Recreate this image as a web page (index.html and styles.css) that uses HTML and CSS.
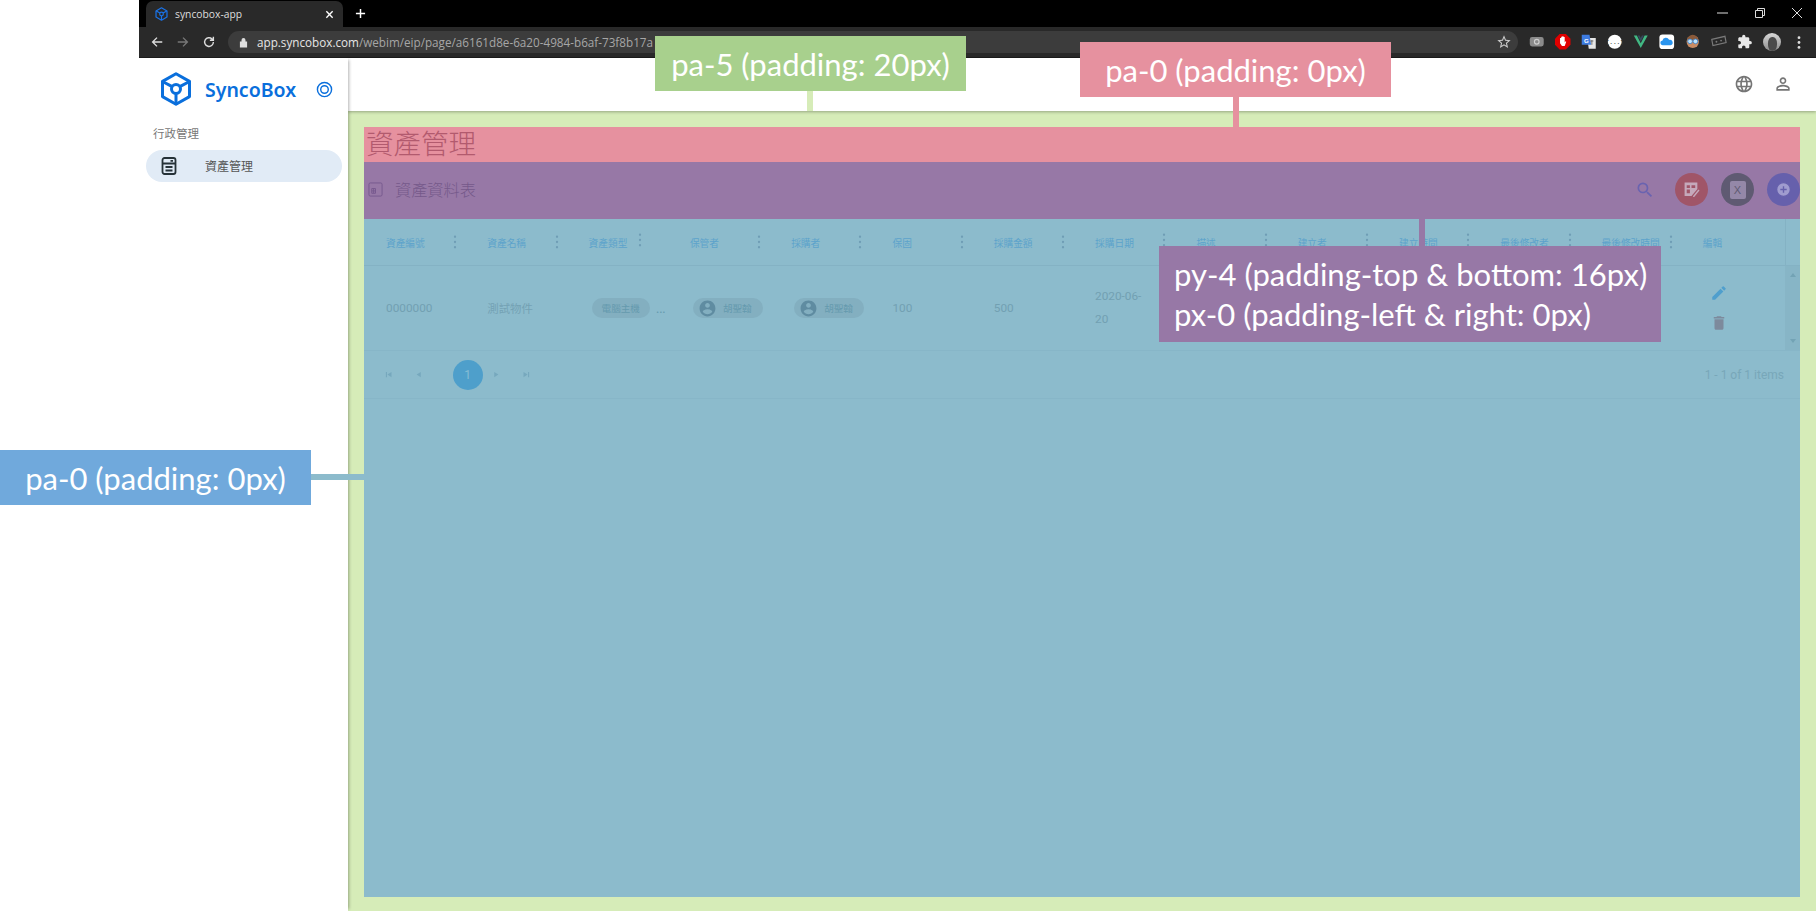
FILE: index.html
```html
<!DOCTYPE html>
<html lang="zh-Hant">
<head>
<meta charset="utf-8">
<title>syncobox-app</title>
<link rel="stylesheet" href="styles.css">
</head>
<body>
<svg class="sprite" aria-hidden="true">
  <symbol id="logo" viewBox="0 0 32 34"><g fill="none" stroke="currentColor" stroke-width="3" stroke-linejoin="round"><path d="M16 1.800 29.500 9.400V24.600L16 32.200 2.500 24.600V9.400z"/><circle cx="16" cy="17" r="4.500"/><path d="M3 9.700 12.200 14.600M29 9.700 19.800 14.600M16 21.500V31.500"/></g></symbol>
  <symbol id="kebab" viewBox="0 0 4 16"><circle cx="2" cy="2" r="1.300"/><circle cx="2" cy="8" r="1.300"/><circle cx="2" cy="14" r="1.300"/></symbol>
  <symbol id="account" viewBox="0 0 24 24"><path d="M12 2C6.480 2 2 6.480 2 12s4.480 10 10 10 10-4.480 10-10S17.520 2 12 2zm0 3c1.660 0 3 1.340 3 3s-1.340 3-3 3-3-1.340-3-3 1.340-3 3-3zm0 14.200c-2.500 0-4.710-1.280-6-3.220.030-1.990 4-3.080 6-3.080 1.990 0 5.970 1.090 6 3.080-1.290 1.940-3.500 3.220-6 3.220z"/></symbol>
</svg>

<div class="page">
  <div class="margin"></div>
  <div class="window">
    <div class="tabstrip">
      <div class="tab">
        <svg class="favicon"><use href="#logo"/></svg>
        <span class="tab-title">syncobox-app</span>
        <svg class="tab-close" viewBox="0 0 10 10"><path d="M1.500 1.500l7 7M8.500 1.500l-7 7"/></svg>
      </div>
      <svg class="tab-new" viewBox="0 0 12 12"><path d="M6 1v10M1 6h10"/></svg>
      <div class="winctl">
        <svg viewBox="0 0 12 12"><path d="M0 6h11" class="thin"/></svg>
        <svg viewBox="0 0 12 12"><path d="M1.500 3.500h7v7h-7zM3.500 3.500v-2h7v7h-2" class="thin"/></svg>
        <svg viewBox="0 0 12 12"><path d="M1 1l10 10M11 1L1 11" class="thin"/></svg>
      </div>
    </div>

    <div class="toolbar">
      <svg class="nav" viewBox="0 0 16 16"><path d="M14 8H3M8 3L3 8l5 5"/></svg>
      <svg class="nav dim" viewBox="0 0 16 16"><path d="M2 8h11M8 3l5 5-5 5"/></svg>
      <svg class="nav" viewBox="0 0 16 16"><path d="M13 8a5 5 0 1 1-1.500-3.500L13 6M13 2v4H9"/></svg>
      <div class="omnibox">
        <svg class="lock" viewBox="0 0 10 12"><path d="M1 5h8v6.500H1zM2.800 5V3.200a2.200 2.200 0 0 1 4.400 0V5" /></svg>
        <span class="url"><b>app.syncobox.com</b>/webim/eip/page/a6161d8e-6a20-4984-b6af-73f8b17a</span>
        <span class="spacer"></span>
        <svg class="star" viewBox="0 0 24 24"><path d="M22 9.240l-7.190-.620L12 2 9.190 8.630 2 9.240l5.460 4.730L5.820 21 12 17.270 18.180 21l-1.630-7.030L22 9.240zM12 15.400l-3.760 2.270 1-4.280-3.320-2.880 4.380-.380L12 6.100l1.710 4.040 4.380.380-3.320 2.880 1 4.280L12 15.400z"/></svg>
      </div>
      <div class="exts">
        <svg viewBox="0 0 20 20"><rect x="1" y="4" width="18" height="12" rx="3" fill="#8b8b8b"/><circle cx="10" cy="10" r="3" fill="none" stroke="#d0d0d0" stroke-width="1.500"/></svg>
        <svg viewBox="0 0 20 20"><path d="M6 0h8l6 6v8l-6 6H6l-6-6V6z" fill="#e00000"/><path d="M6.500 8V5h1.500v3-4.500h1.500V8 3h1.500v5-4h1.500v7l1-1.500 1 .5-2 5.500H9L6.500 12z" fill="#fff"/></svg>
        <svg viewBox="0 0 20 20"><path d="M8 5h11v14H10z" fill="#e6e6e6"/><path d="M1 1h10l2 13H1z" fill="#3d7be0"/><text x="4" y="11" class="ext-g">G</text><path d="M12 9h4M14 8v6" stroke="#555" fill="none"/></svg>
        <svg viewBox="0 0 20 20"><circle cx="10" cy="10" r="9" fill="#fff"/><text x="10" y="13" class="ext-j">{...}</text></svg>
        <svg viewBox="0 0 20 20"><path d="M1 2h4l5 10 5-10h4l-9 16z" fill="#41b883"/><path d="M6 2h2.500L10 5l1.500-3H14l-4 8z" fill="#35495e"/></svg>
        <svg viewBox="0 0 20 20"><rect x="0.500" y="0.500" width="19" height="19" rx="4" fill="#fff"/><path d="M5 14.500a3 3 0 0 1-.500-6A4.500 4.500 0 0 1 13 7.500a3.500 3.500 0 0 1 2 7z" fill="#2a95ef"/></svg>
        <svg viewBox="0 0 20 20"><circle cx="10" cy="10" r="8" fill="#c98b62"/><path d="M3 8a7 7 0 0 1 14 0z" fill="#8a5a3a"/><circle cx="6.500" cy="9.500" r="3" fill="#bfe3fa" stroke="#2f7fd0"/><circle cx="13.500" cy="9.500" r="3" fill="#bfe3fa" stroke="#2f7fd0"/></svg>
        <svg viewBox="0 0 20 20"><path d="M1 7l17-4 1.500 8-17 4z" fill="none" stroke="#7a7a7a" stroke-width="1.500"/><circle cx="7" cy="10" r="1.200" fill="#7a7a7a"/><circle cx="13" cy="8.500" r="1.200" fill="#7a7a7a"/></svg>
        <svg viewBox="0 0 24 24"><path fill="#e8e8e8" d="M20.500 11H19V7c0-1.100-.9-2-2-2h-4V3.500a2.500 2.500 0 0 0-5 0V5H4c-1.100 0-1.990.9-1.990 2v3.800H3.500c1.490 0 2.700 1.210 2.700 2.700s-1.210 2.700-2.700 2.700H2V20c0 1.100.9 2 2 2h3.800v-1.500c0-1.490 1.210-2.700 2.700-2.700 1.490 0 2.700 1.210 2.700 2.700V22H17c1.100 0 2-.9 2-2v-4h1.500a2.500 2.500 0 0 0 0-5z"/></svg>
        <div class="avatar"><span class="avatar-head"></span></div>
        <svg class="menu-dots" viewBox="0 0 4 16"><circle cx="2" cy="2" r="1.700"/><circle cx="2" cy="8" r="1.700"/><circle cx="2" cy="14" r="1.700"/></svg>
      </div>
    </div>

    <div class="app">
      <aside class="sidebar">
        <div class="brand">
          <svg class="brand-logo"><use href="#logo"/></svg>
          <span class="brand-name">SyncoBox</span>
          <svg class="brand-pin" viewBox="0 0 18 18"><circle cx="9" cy="9" r="7.500"/><circle cx="9" cy="9" r="4"/></svg>
        </div>
        <div class="nav-group">行政管理</div>
        <div class="nav-item">
          <svg class="nav-icon" viewBox="0 0 16 18"><rect x="1.500" y="1" width="13" height="16" rx="2"/><path d="M1.500 6.500h13M4.500 10h7M4.500 13.500h7M9.500 3.800h2.500"/></svg>
          <span>資產管理</span>
        </div>
      </aside>

      <div class="main">
        <header class="appbar">
          <svg class="bar-icon" viewBox="0 0 24 24"><path d="M11.990 2C6.470 2 2 6.480 2 12s4.470 10 9.990 10C17.520 22 22 17.520 22 12S17.520 2 11.990 2zm6.930 6h-2.950a15.650 15.650 0 0 0-1.380-3.560A8.030 8.030 0 0 1 18.920 8zM12 4.040c.83 1.200 1.480 2.530 1.910 3.960h-3.820c.43-1.430 1.080-2.760 1.910-3.960zM4.260 14C4.100 13.360 4 12.690 4 12s.1-1.360.26-2h3.380c-.08.66-.14 1.320-.14 2 0 .68.06 1.340.14 2H4.260zm.82 2h2.950c.32 1.250.78 2.450 1.380 3.560A7.987 7.987 0 0 1 5.080 16zm2.950-8H5.080a7.987 7.987 0 0 1 4.330-3.560A15.650 15.650 0 0 0 8.030 8zM12 19.960c-.83-1.200-1.480-2.530-1.910-3.960h3.820c-.43 1.430-1.080 2.760-1.910 3.960zM14.340 14H9.660c-.09-.66-.16-1.320-.16-2 0-.68.07-1.350.16-2h4.680c.09.650.16 1.320.16 2 0 .68-.07 1.340-.16 2zm.25 5.560c.6-1.110 1.060-2.310 1.380-3.560h2.950a8.030 8.030 0 0 1-4.330 3.560zM16.360 14c.08-.66.14-1.320.14-2 0-.68-.06-1.340-.14-2h3.380c.16.640.26 1.310.26 2s-.1 1.360-.26 2h-3.380z"/></svg>
          <svg class="bar-icon" viewBox="0 0 24 24"><path d="M12 5.900a2.100 2.100 0 1 1 0 4.200 2.100 2.100 0 0 1 0-4.200m0 9c2.970 0 6.100 1.460 6.100 2.100v1.100H5.900V17c0-.64 3.130-2.100 6.100-2.100M12 4C9.790 4 8 5.790 8 8s1.790 4 4 4 4-1.790 4-4-1.790-4-4-4zm0 9c-2.670 0-8 1.340-8 4v3h16v-3c0-2.660-5.330-4-8-4z"/></svg>
        </header>

        <main class="content">
          <h1 class="title">資產管理</h1>
          <section class="card-head">
            <svg class="table-icon" viewBox="0 0 16 16"><rect x="1" y="1" width="14" height="14" rx="1.500"/><path d="M4 7h4v5H4zM6 7v5M4 9.500h4"/></svg>
            <span class="card-title">資產資料表</span>
            <span class="spacer"></span>
            <svg class="search" viewBox="0 0 24 24"><path d="M15.500 14h-.79l-.28-.27A6.470 6.470 0 0 0 16 9.500 6.500 6.500 0 1 0 9.500 16c1.610 0 3.090-.59 4.230-1.570l.27.28v.79l5 4.990L20.490 19l-4.990-5zm-6 0C7.010 14 5 11.990 5 9.500S7.010 5 9.500 5 14 7.010 14 9.500 11.990 14 9.500 14z"/></svg>
            <button class="fab fab-red"><svg viewBox="0 0 16 16"><path fill-rule="evenodd" d="M1.500 1.500h12v6l-5.500 6.500h-6.500zM3.500 4v2.500h3V4zM8 4v2.500h3.500V4zM3.500 8v3.500h3V8z"/><path d="M9.500 14l5-6 1 1-5 6h-1z"/></svg></button>
            <button class="fab fab-gray"><span class="fab-x">X</span></button>
            <button class="fab fab-blue"><svg viewBox="0 0 16 16"><circle cx="8" cy="8" r="6.500"/><path d="M8 5v6M5 8h6"/></svg></button>
          </section>

          <section class="table">
            <div class="grid head">
              <div class="th"><span>資產編號</span><svg class="kebab"><use href="#kebab"/></svg></div>
              <div class="th"><span>資產名稱</span><svg class="kebab"><use href="#kebab"/></svg></div>
              <div class="th th-narrow"><span>資產類型</span><svg class="kebab raised"><use href="#kebab"/></svg></div>
              <div class="th"><span>保管者</span><svg class="kebab"><use href="#kebab"/></svg></div>
              <div class="th"><span>採購者</span><svg class="kebab"><use href="#kebab"/></svg></div>
              <div class="th"><span>保固</span><svg class="kebab"><use href="#kebab"/></svg></div>
              <div class="th"><span>採購金額</span><svg class="kebab"><use href="#kebab"/></svg></div>
              <div class="th"><span>採購日期</span><svg class="kebab raised"><use href="#kebab"/></svg></div>
              <div class="th"><span>描述</span><svg class="kebab raised"><use href="#kebab"/></svg></div>
              <div class="th"><span>建立者</span><svg class="kebab raised"><use href="#kebab"/></svg></div>
              <div class="th"><span>建立時間</span><svg class="kebab raised"><use href="#kebab"/></svg></div>
              <div class="th"><span>最後修改者</span><svg class="kebab raised"><use href="#kebab"/></svg></div>
              <div class="th"><span>最後修改時間</span><svg class="kebab"><use href="#kebab"/></svg></div>
              <div class="th"><span>編輯</span></div>
              <div class="th-end"></div>
            </div>
            <div class="grid row">
              <div class="td td-num">0000000</div>
              <div class="td">測試物件</div>
              <div class="td td-chip"><span class="chip">電腦主機</span><span class="more">...</span></div>
              <div class="td td-chip"><span class="chip"><svg class="chip-avatar"><use href="#account"/></svg>胡聖翰</span></div>
              <div class="td td-chip"><span class="chip"><svg class="chip-avatar"><use href="#account"/></svg>胡聖翰</span></div>
              <div class="td td-num">100</div>
              <div class="td td-num">500</div>
              <div class="td td-num td-date">2020-06-<br>20</div>
              <div class="td"></div>
              <div class="td"></div>
              <div class="td"></div>
              <div class="td"></div>
              <div class="td"></div>
              <div class="td td-actions">
                <svg class="pencil" viewBox="0 0 24 24"><path d="M3 17.250V21h3.750L17.810 9.940l-3.750-3.750L3 17.250zM20.710 7.040a1 1 0 0 0 0-1.410l-2.340-2.340a1 1 0 0 0-1.410 0l-1.830 1.830 3.750 3.750 1.830-1.830z"/></svg>
                <svg class="trash" viewBox="0 0 24 24"><path d="M6 19c0 1.100.9 2 2 2h8c1.100 0 2-.9 2-2V7H6v12zM19 4h-3.500l-1-1h-5l-1 1H5v2h14V4z"/></svg>
              </div>
              <div class="scroll">
                <svg viewBox="0 0 8 6"><path d="M4 1l3 4H1z"/></svg>
                <svg viewBox="0 0 8 6"><path d="M4 5l3-4H1z"/></svg>
              </div>
            </div>
            <div class="pager">
              <svg class="pg first" viewBox="0 0 24 24"><path d="M5 5h3v14H5zM20 5v14L9 12z"/></svg>
              <svg class="pg prev" viewBox="0 0 24 24"><path d="M18 5v14L7 12z"/></svg>
              <span class="pg-num">1</span>
              <svg class="pg next" viewBox="0 0 24 24"><path d="M6 5v14l11-7z"/></svg>
              <svg class="pg last" viewBox="0 0 24 24"><path d="M4 5v14l11-7zM16 5h3v14h-3z"/></svg>
              <span class="spacer"></span>
              <span class="pg-info">1 - 1 of 1 items</span>
            </div>
          </section>
        </main>
      </div>
    </div>
  </div>
</div>

<div class="note note-green">pa-5 (padding: 20px)</div>
<div class="wire wire-green"></div>
<div class="note note-pink">pa-0 (padding: 0px)</div>
<div class="wire wire-pink"></div>
<div class="note note-purple">py-4 (padding-top &amp; bottom: 16px)<br>px-0 (padding-left &amp; right: 0px)</div>
<div class="wire wire-purple"></div>
<div class="note note-blue">pa-0 (padding: 0px)</div>
<div class="wire wire-blue"></div>
</body>
</html>
```

FILE: styles.css
```css
* { box-sizing: border-box; }
html, body { margin: 0; height: 100%; overflow: hidden; background: #fff; }
body { font-family: "Noto Sans CJK TC", "Noto Sans", sans-serif; }
.sprite { position: absolute; width: 0; height: 0; }
svg { display: block; flex: none; }

.page { display: flex; height: 911px; }
.margin { width: 139px; flex: none; }
.window { flex: 1; display: flex; flex-direction: column; min-width: 0; }

/* Browser chrome */
.tabstrip { height: 27px; background: #000; display: flex; align-items: flex-end; padding-left: 7px; flex: none; }
.tab { width: 197px; height: 26px; background: #292929; border-radius: 7px 7px 0 0; display: flex; align-items: center; padding: 0 9px 0 9px; }
.favicon { width: 13px; height: 14px; color: #1a73e8; }
.tab-title { font: 10.300px "Open Sans", sans-serif; color: #dedede; margin-left: 7px; flex: 1; }
.tab-close { width: 9px; height: 9px; fill: none; stroke: #fff; stroke-width: 1.500; }
.tab-new { width: 11px; height: 11px; margin: 0 0 8px 12px; fill: none; stroke: #fff; stroke-width: 1.600; }
.winctl { margin-left: auto; display: flex; gap: 25px; padding: 0 13px 8px 0; }
.winctl svg { width: 12px; height: 12px; }
.thin { fill: none; stroke: #ddd; stroke-width: 1; }

.toolbar { height: 31px; background: #292929; border-bottom: 1px solid #1c1c1c; display: flex; align-items: center; padding-left: 11px; flex: none; }
.nav { width: 14px; height: 14px; margin-right: 12px; fill: none; stroke: #ddd; stroke-width: 1.600; }
.nav.dim { stroke: #777; }
.omnibox { width: 1290px; height: 22px; background: #3c3c3c; border-radius: 11px; display: flex; align-items: center; padding: 0 6px 0 11px; }
.lock { width: 9px; height: 11px; fill: #ddd; }
.url { font: 11.700px "Open Sans", sans-serif; color: #a6a6a6; margin-left: 9px; white-space: nowrap; }
.url b { font-weight: 400; color: #e6e6e6; }
.star { width: 16px; height: 16px; fill: #ccc; }
.exts { display: flex; align-items: center; gap: 10.500px; margin-left: 11px; }
.exts svg { width: 15.500px; height: 15.500px; }
.ext-g { font: 700 8px "Liberation Sans", sans-serif; fill: #fff; }
.ext-j { font: 700 8px "Liberation Mono", monospace; fill: #333; text-anchor: middle; }
.avatar { width: 18px; height: 18px; border-radius: 50%; background: linear-gradient(#d8d8d8, #8b8b8b); display: flex; justify-content: center; align-items: flex-end; overflow: hidden; }
.avatar-head { width: 9px; height: 14px; border-radius: 45%; background: #4a4a4a; }
.exts .menu-dots { width: 4px; height: 13px; fill: #ddd; margin-left: 5px; }

/* App shell */
.app { flex: 1; display: flex; min-height: 0; }
.sidebar { width: 209px; flex: none; background: #fff; box-shadow: 3px 0 3px -2px rgba(0,0,0,.3); position: relative; z-index: 2; padding: 14px 6px 0 7px; }
.brand { display: flex; align-items: center; height: 34px; padding-left: 14px; }
.brand-logo { width: 32px; height: 34px; color: #0a6fdc; }
.brand-name { font: 600 19.500px "Noto Sans", sans-serif; color: #0a6fdc; margin-left: 13px; }
.brand-pin { width: 17px; height: 17px; margin-left: 20px; fill: none; stroke: #0a6fdc; stroke-width: 1.500; }
.nav-group { font-size: 11.500px; line-height: 16px; color: #777; margin: 19px 0 9px 7px; }
.nav-item { height: 32px; border-radius: 16px; background: #e1ebf6; display: flex; align-items: center; padding: 0 0 2px 15px; font-size: 12px; color: #555; }
.nav-item span { margin-left: 28px; }
.nav-icon { width: 16px; height: 18px; fill: none; stroke: #263238; stroke-width: 1.800; margin-top: 2px; }

.main { flex: 1; display: flex; flex-direction: column; min-width: 0; }
.appbar { height: 53px; flex: none; background: #fff; box-shadow: 0 1px 3px rgba(0,0,0,.3); position: relative; z-index: 1; display: flex; align-items: center; justify-content: flex-end; gap: 19px; padding: 0 23px 2px 0; }
.bar-icon { width: 20px; height: 20px; fill: #757575; }
.content { flex: 1; background: #d6ecb8; padding: 16px 16px 14px; display: flex; flex-direction: column; min-height: 0; }

.title { margin: 0; height: 35px; background: #e6919f; color: #b25a6e; font-size: 27.500px; font-weight: 300; line-height: 31px; padding-left: 2px; flex: none; }
.card-head { height: 57px; flex: none; background: #9778a6; display: flex; align-items: center; padding: 0 0 2px 4px; }
.table-icon { width: 15px; height: 15px; fill: none; stroke: #76598e; stroke-width: 1; }
.card-title { font-size: 16.200px; font-weight: 300; color: #75598a; margin: 0 0 2px 12px; }
.spacer { flex: 1; }
.search { width: 20px; height: 20px; fill: #6a63b0; margin-right: 20px; }
.fab { width: 33px; height: 33px; border: 0; border-radius: 50%; padding: 0; margin-left: 13px; display: flex; align-items: center; justify-content: center; }
.fab svg { width: 17px; height: 17px; }
.search + .fab { margin-left: 0; }
.fab-red { background: #a05568; }
.fab-red svg { fill: #c5a9bb; }
.fab-gray { background: #5f5a72; }
.fab-x { width: 16px; height: 18px; background: #9488a8; color: #5f5a72; font: 11px/18px "Liberation Sans", sans-serif; border-radius: 2px; }
.fab-blue { background: #6660ac; }
.fab-blue svg { fill: #a09ccf; stroke: #6660ac; stroke-width: 1.300; }

/* Table */
.table { flex: 1; background: #8cbbcc; min-height: 0; }
.grid { display: grid; grid-template-columns: repeat(13, 101.300px) 104.600px 14.500px; }
.head { height: 47px; border-bottom: 1px solid #84b2c4; }
.th { display: flex; align-items: center; justify-content: space-between; padding: 0 8px 0 22px; font-size: 9.700px; color: #5ca3cb; white-space: nowrap; }
.th-narrow { padding-right: 26px; }
.th span { padding-top: 2px; }
.kebab { width: 4px; height: 14px; fill: #6f9db5; }
.kebab.raised { margin-bottom: 5px; }
.th-end { border-left: 1px solid #84b2c4; }

.row { height: 85px; border-bottom: 1px solid #87b6c8; align-items: center; }
.td { padding-left: 22px; font-size: 11.400px; color: #74a2b4; white-space: nowrap; }
.td-num { font: 400 11.800px "Roboto", sans-serif; color: #72a0b2; }
.td-date { line-height: 23px; }
.td-chip { padding-left: 25px; display: flex; align-items: center; }
.chip { height: 20px; border-radius: 10px; background: #83afc0; color: #659aae; font-size: 9.600px; display: flex; align-items: center; padding: 0 10px; }
.td-chip:nth-child(n+4) .chip { padding: 0 11px 0 5px; }
.chip-avatar { width: 19px; height: 19px; fill: #5f8ca1; margin-right: 6px; }
.more { color: #659aae; margin-left: 6px; line-height: 14px; }
.td-actions { padding-left: 29px; display: flex; flex-direction: column; gap: 12px; }
.pencil { width: 18px; height: 18px; fill: #4f9fcd; }
.trash { width: 18px; height: 18px; fill: #7d8a9c; }
.scroll { align-self: stretch; background: #87b5c6; display: flex; flex-direction: column; justify-content: space-between; align-items: center; padding: 6px 0; }
.scroll svg { width: 8px; height: 6px; fill: #73a3b5; }

.pager { height: 48px; border-bottom: 1px solid #87b6c8; display: flex; align-items: center; padding: 0 16px 0 20px; }
.pg { width: 9px; height: 9px; fill: #76a8bd; }
.prev { margin-left: 20.500px; }
.pg-num { width: 30px; height: 30px; border-radius: 50%; background: #4e9fcb; color: #85bcd4; font: 12px/30px "Roboto", sans-serif; text-align: center; margin-left: 30px; }
.next { margin-left: 9px; }
.last { margin-left: 21px; }
.pg-info { font: 400 12px "Roboto", sans-serif; color: #78a7b9; }

/* Annotations laid over the screenshot */
.note { position: absolute; z-index: 5; color: #fff; font: 31px/40px "Lato", sans-serif; white-space: nowrap; display: flex; align-items: center; justify-content: center; }
.note-green { left: 655px; top: 36px; width: 311px; height: 55px; background: #a8d08d; }
.note-pink { left: 1080px; top: 42px; width: 311px; height: 55px; background: #e6919f; }
.note-purple { left: 1159px; top: 246px; width: 502px; height: 96px; background: #9778a6; justify-content: flex-start; padding-left: 15px; }
.note-blue { left: 0; top: 450px; width: 311px; height: 55px; background: #70a9dc; }
.wire { position: absolute; z-index: 4; }
.wire-green { left: 807px; top: 91px; width: 6px; height: 20px; background: #d6ecb8; }
.wire-pink { left: 1233px; top: 97px; width: 6px; height: 30px; background: #e6919f; }
.wire-purple { left: 1419px; top: 219px; width: 6px; height: 27px; background: #9778a6; }
.wire-blue { left: 311px; top: 474px; width: 53px; height: 6px; background: #8cbbcc; }
```
